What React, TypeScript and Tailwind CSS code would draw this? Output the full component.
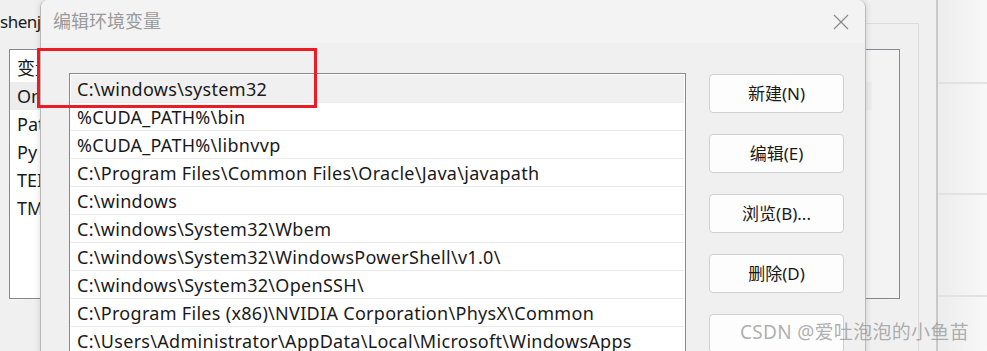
import React from "react";

const font = { fontFamily: '"Noto Sans", "Noto Sans CJK SC", sans-serif' };

const paths = [
  "C:\\windows\\system32",
  "%CUDA_PATH%\\bin",
  "%CUDA_PATH%\\libnvvp",
  "C:\\Program Files\\Common Files\\Oracle\\Java\\javapath",
  "C:\\windows",
  "C:\\windows\\System32\\Wbem",
  "C:\\windows\\System32\\WindowsPowerShell\\v1.0\\",
  "C:\\windows\\System32\\OpenSSH\\",
  "C:\\Program Files (x86)\\NVIDIA Corporation\\PhysX\\Common",
  "C:\\Users\\Administrator\\AppData\\Local\\Microsoft\\WindowsApps",
];

const buttons = ["新建(N)", "编辑(E)", "浏览(B)...", "删除(D)", ""];

const bgRows = ["变量", "On", "Pat", "Py", "TEI", "TM"];

export default function App() {
  return (
    <div
      className="relative w-[987px] h-[351px] overflow-hidden bg-[#f0f0f0] text-[#1a1a1a]"
      style={font}
    >
      {/* window behind */}
      <div className="absolute inset-0 flex">
        <div className="relative w-[938px] shrink-0 border-r-2 border-[#c9c9c9] pl-[9px] pt-[8px]">
          <div className="-ml-[9px] text-[17px] leading-[28px] tracking-[-0.5px]">shenj</div>
          <div className="mt-[13px] w-[891px] h-[250px] border border-[#868a90] bg-gradient-to-r from-white to-[#f3f3f3]">
            <div className="flex flex-col pt-[4px]">
              {bgRows.map((r, i) => (
                <div
                  key={r}
                  className={`h-[28px] pl-[7px] text-[18px] leading-[28px] ${i === 1 ? "bg-[#ededed] w-[862px]" : ""}`}
                >
                  {r}
                </div>
              ))}
            </div>
          </div>
          <div className="absolute left-[800px] top-[23px] w-[119px] h-[340px] border-t border-r border-[#dcdcdc]" />
        </div>
        <div className="flex-1 flex flex-col gap-[109px] pt-[82px] bg-gradient-to-r from-[#ececec] to-[#f8f8f8]">
          <div className="h-[2px] bg-[#e2e2e2]" />
          <div className="h-[2px] bg-[#e2e2e2]" />
          <div className="h-[2px] bg-[#e2e2e2] -mt-[9px]" />
        </div>
      </div>

      {/* dialog */}
      <div className="absolute left-[40px] top-0 w-[826px] h-[380px] rounded-t-[8px] bg-[#f0f0f0] border-l border-r border-[#b8b8b8] shadow-[0_0_6px_rgba(0,0,0,0.15)] overflow-hidden">
        <div className="h-[43px] bg-[#f3f3f3] flex items-center justify-between pl-[12px] pr-[16px]">
          <span className="text-[18px] text-[#9a9a9a]">编辑环境变量</span>
          <svg width="16" height="16" viewBox="0 0 16 16" className="mt-[1px]">
            <path d="M1 1 L15 15 M15 1 L1 15" stroke="#8a8a8a" strokeWidth="1.2" />
          </svg>
        </div>
        <div className="flex pl-[28px] pt-[30px] gap-[23px]">
          <div className="w-[617px] h-[320px] border border-[#868a90] bg-white p-[1px]">
            {paths.map((p, i) => (
              <div
                key={p}
                className={`h-[28px] pl-[6px] text-[18px] tracking-[0.3px] leading-[28px] whitespace-nowrap border-b border-[#ebebeb] ${i === 0 ? "bg-[#f0f0f0]" : ""}`}
              >
                {p}
              </div>
            ))}
          </div>
          <div className="flex flex-col gap-[21px] pt-[1px]">
            {buttons.map((b, i) => (
              <div
                key={i}
                className="w-[135px] h-[39px] shrink-0 rounded-[4px] border border-[#d0d0d0] bg-[#fdfdfd] flex items-center justify-center text-[17px]"
              >
                {b}
              </div>
            ))}
          </div>
        </div>
      </div>

      {/* annotation */}
      <div className="absolute left-[37px] top-[48px] w-[280px] h-[60px] border-[3px] border-[#ed1c24]" />

      <div className="absolute left-[740px] top-[318px] text-[19px] leading-[28px] tracking-[0.3px] text-[#9b9b9b]/80 whitespace-nowrap">
        CSDN @爱吐泡泡的小鱼苗
      </div>
    </div>
  );
}
